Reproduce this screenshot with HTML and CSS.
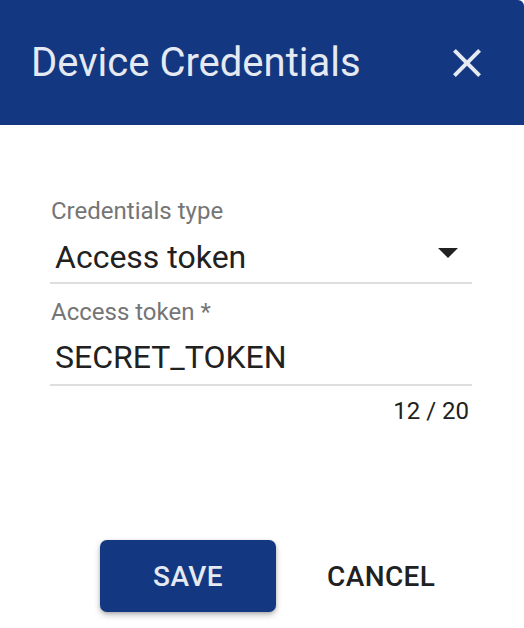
FILE: index.html
```html
<!DOCTYPE html>
<html>
<head>
<meta charset="utf-8">
<link rel="stylesheet" href="styles.css">
</head>
<body>
<div class="dialog">
  <header class="header">
    <h1 class="title">Device Credentials</h1>
    <button class="close" aria-label="Close">
      <svg width="48" height="48" viewBox="0 0 24 24"><path d="M19 6.41L17.59 5 12 10.59 6.41 5 5 6.41 10.59 12 5 17.59 6.41 19 12 13.41 17.59 19 19 17.59 13.41 12z" fill="#e4e9f2"/></svg>
    </button>
  </header>
  <main class="content">
    <div class="field">
      <div class="label">Credentials type</div>
      <div class="control select">
        <span class="value">Access token</span>
        <span class="arrow"></span>
      </div>
    </div>
    <div class="field second">
      <div class="label">Access token *</div>
      <div class="control input">
        <span class="value">SECRET_TOKEN</span>
      </div>
      <div class="hint">12 / 20</div>
    </div>
  </main>
  <footer class="actions">
    <button class="btn primary">SAVE</button>
    <button class="btn plain">CANCEL</button>
  </footer>
</div>
</body>
</html>
```
FILE: styles.css
```css
* { box-sizing: border-box; }
html, body { margin: 0; padding: 0; }
body {
  width: 524px;
  height: 628px;
  background: #ffffff;
  font-family: Roboto, "Noto Sans", sans-serif;
  overflow: hidden;
}
.dialog {
  width: 524px;
  height: 628px;
  display: flex;
  flex-direction: column;
}
.header {
  height: 125px;
  flex: none;
  background: #133780;
  border-top-right-radius: 6px;
  display: flex;
  align-items: center;
  justify-content: space-between;
  padding: 0 25px 0 31px;
}
.title {
  margin: 0;
  font-size: 40px;
  font-weight: 400;
  color: #e4e9f2;
  letter-spacing: 0;
  line-height: 40px;
}
.close {
  border: 0;
  background: none;
  padding: 0;
  width: 64px;
  height: 64px;
  display: flex;
  align-items: center;
  justify-content: center;
  cursor: pointer;
}
.content {
  padding: 74px 52px 0 50px;
  display: flex;
  flex-direction: column;
}
.field {
  display: flex;
  flex-direction: column;
}
.label {
  font-size: 24px;
  color: #757575;
  line-height: 24px;
  padding-left: 1px;
}
.control {
  border-bottom: 2px solid #dedede;
  display: flex;
  align-items: center;
  justify-content: space-between;
  padding-left: 5px;
  padding-right: 14px;
}
.select { padding-top: 16px; padding-bottom: 7px; }
.input { padding-top: 15px; padding-bottom: 9px; }
.value {
  font-size: 32px;
  color: #212121;
  line-height: 36px;
}
.arrow {
  width: 0;
  height: 0;
  border-left: 10.5px solid transparent;
  border-right: 10.5px solid transparent;
  border-top: 10px solid #222;
  margin-bottom: 8px;
}
.second { margin-top: 16px; }
.hint {
  text-align: right;
  font-size: 24px;
  color: #212121;
  line-height: 24px;
  margin-top: 13px;
  padding-right: 3px;
}
.actions {
  margin-top: auto;
  padding: 0 0 16px 100px;
  display: flex;
  align-items: center;
  gap: 51px;
}
.btn {
  font-family: Roboto, "Noto Sans", sans-serif;
  font-size: 28px;
  font-weight: 500;
  letter-spacing: 0.4px;
  border: 0;
  cursor: pointer;
}
.primary {
  width: 176px;
  height: 72px;
  background: #133780;
  color: #e4e9f2;
  border-radius: 7px;
  box-shadow: 0 3px 6px rgba(0,0,0,0.25), 0 1px 3px rgba(0,0,0,0.15);
}
.plain {
  background: none;
  color: #212121;
  padding: 0;
  height: 72px;
}
```
